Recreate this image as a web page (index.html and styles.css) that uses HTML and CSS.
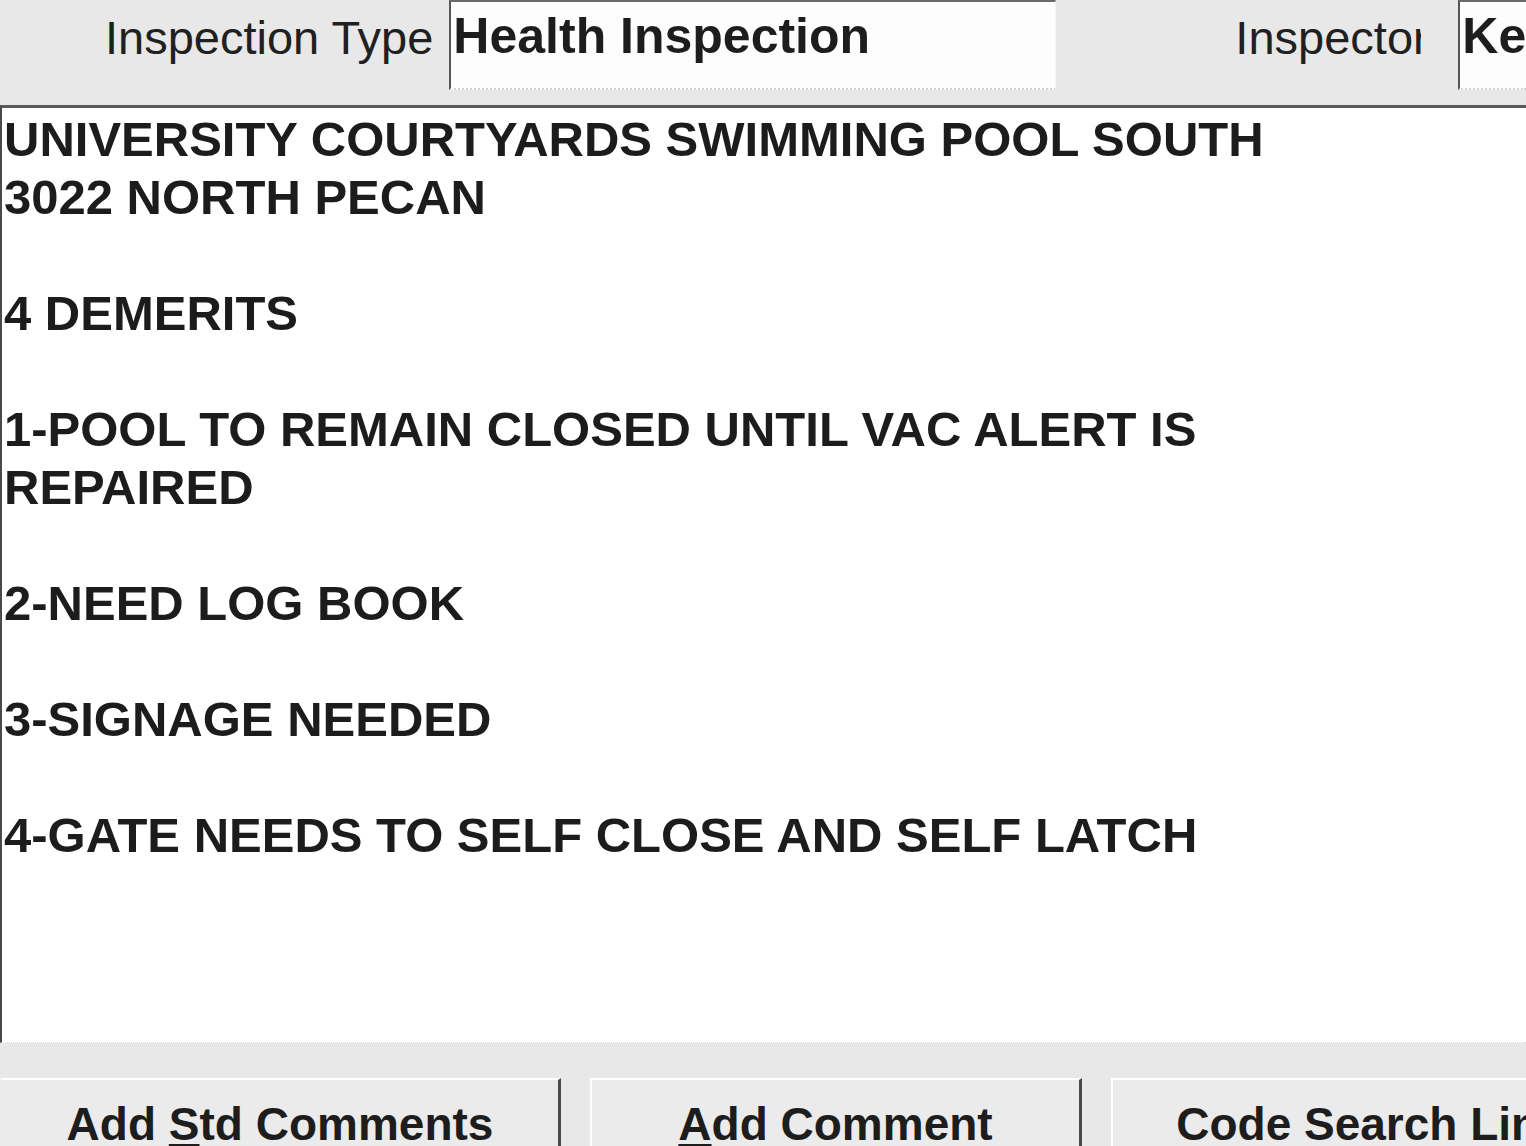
FILE: index.html
```html
<!DOCTYPE html>
<html lang="en">
<head>
<meta charset="utf-8">
<title>Inspection Comments</title>
<link rel="stylesheet" href="styles.css">
</head>
<body>
<div class="page">
  <div class="topbar">
    <label class="field-label type-label">Inspection Type</label>
    <div class="field type-field">Health Inspection</div>
    <label class="field-label inspector-label">Inspector</label>
    <div class="field inspector-field">Ke</div>
  </div>
  <div class="comments">
    <div class="comments-text">UNIVERSITY COURTYARDS SWIMMING POOL SOUTH
3022 NORTH PECAN

4 DEMERITS

1-POOL TO REMAIN CLOSED UNTIL VAC ALERT IS REPAIRED

2-NEED LOG BOOK

3-SIGNAGE NEEDED

4-GATE NEEDS TO SELF CLOSE AND SELF LATCH</div>
  </div>
  <div class="buttonbar">
    <button class="btn btn-std"><span class="btn-label">Add <u>S</u>td Comments</span></button>
    <button class="btn btn-add"><span class="btn-label"><u>A</u>dd Comment</span></button>
    <button class="btn btn-code"><span class="btn-label">Code Search Link</span></button>
  </div>
</div>
</body>
</html>
```

FILE: styles.css
```css
html, body {
  margin: 0;
  padding: 0;
}

body {
  width: 1526px;
  height: 1146px;
  overflow: hidden;
  background: #e8e8e8;
  font-family: "Liberation Sans", Arial, sans-serif;
  color: #1d1d1d;
}

.page {
  display: flex;
  flex-direction: column;
  height: 1146px;
}

/* ---------- top bar ---------- */
.topbar {
  height: 105px;
  flex: none;
  display: flex;
  align-items: flex-start;
  overflow: hidden;
}

.field-label {
  font-size: 47px;
  padding-top: 10px;
  white-space: nowrap;
  color: #202020;
}

.type-label {
  margin-left: 105px;
}

.inspector-label {
  margin-left: 179px;
  width: 186px;
  overflow: hidden;
}

.field {
  box-sizing: border-box;
  height: 90px;
  background: #fdfdfd;
  border-top: 2px solid #6a6a6a;
  border-left: 2px solid #555;
  border-bottom: 2px dotted #d4d4d4;
  font-size: 50px;
  font-weight: bold;
  padding-top: 5px;
  padding-left: 2px;
  white-space: nowrap;
  overflow: hidden;
}

.type-field {
  margin-left: 16px;
  width: 607px;
  border-right: 1px solid #f4f4f4;
}

.inspector-field {
  margin-left: 37px;
  flex: 1;
}

/* ---------- comments area ---------- */
.comments {
  height: 938px;
  flex: none;
  box-sizing: border-box;
  background: #ffffff;
  border-top: 3px solid #5a5a5a;
  border-left: 2px solid #4a4a4a;
  border-bottom: 1px dotted #d8d8d8;
  padding: 2px 0 0 2px;
  overflow: hidden;
}

.comments-text {
  width: 1300px;
  white-space: pre-wrap;
  font-size: 49px;
  font-weight: bold;
  line-height: 58px;
  color: #1c1c1c;
}

/* ---------- buttons ---------- */
.buttonbar {
  flex: 1;
  display: flex;
  align-items: flex-start;
  padding-top: 35px;
  gap: 29px;
  overflow: hidden;
}

.btn {
  flex: none;
  height: 90px;
  box-sizing: border-box;
  background: #ebebeb;
  border: none;
  border-top: 2px solid #ffffff;
  border-left: 2px solid #ffffff;
  border-right: 3px solid #4a4a4a;
  font-family: "Liberation Sans", Arial, sans-serif;
  font-size: 46px;
  font-weight: bold;
  color: #1d1d1d;
  padding: 17px 0 0 0;
  display: flex;
  justify-content: center;
  align-items: flex-start;
  overflow: hidden;
}

.btn-label {
  white-space: nowrap;
}

.btn u {
  text-decoration-thickness: 3px;
  text-underline-offset: 4px;
}

.btn-std {
  width: 561px;
  border-left-color: #ebebeb;
}

.btn-add {
  width: 492px;
}

.btn-code {
  width: 520px;
}
```
